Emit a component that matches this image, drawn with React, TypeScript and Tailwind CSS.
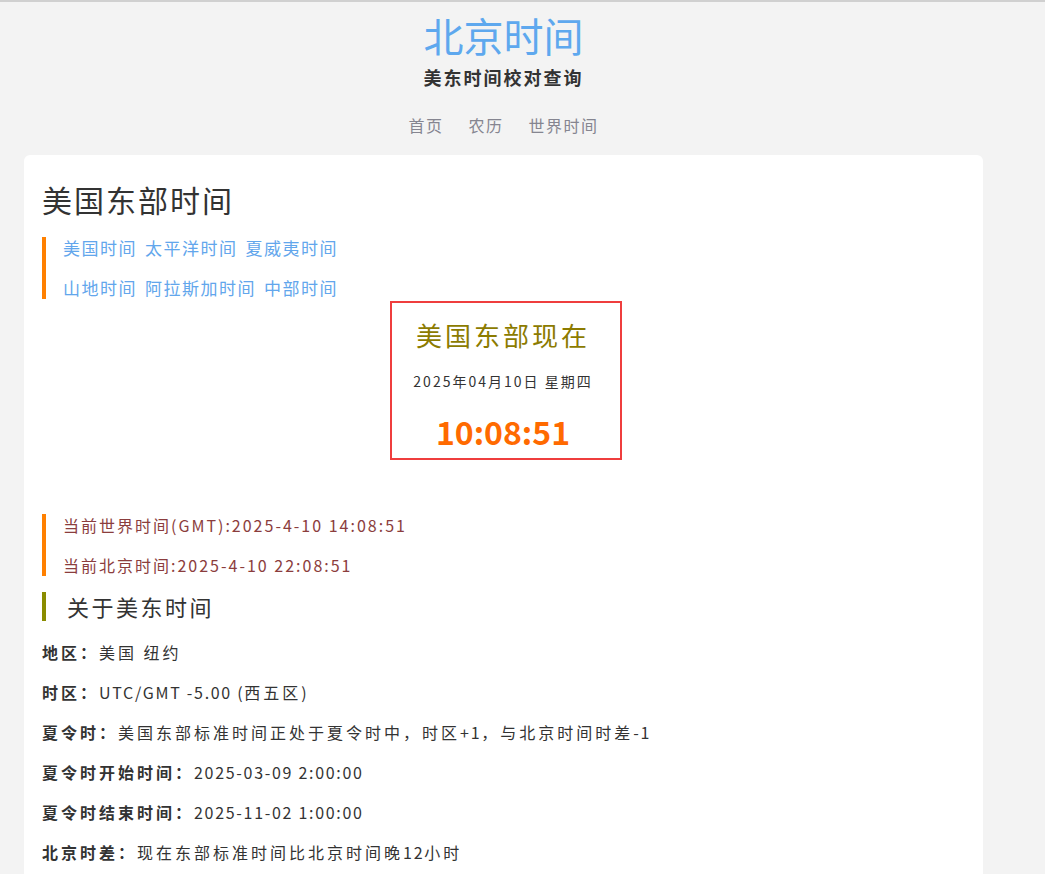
import React from "react";

const font = { fontFamily: '"Noto Sans CJK SC", "Noto Sans", sans-serif' };

function L({ children }: { children: React.ReactNode }) {
  return <span className="tracking-[1.7px]">{children}</span>;
}

function Row({ label, children }: { label: string; children: React.ReactNode }) {
  return (
    <div className="h-[40px] flex items-center text-[16px] tracking-[3px] text-[#333] whitespace-pre">
      <span className="font-bold">{label}：</span>
      <span>{children}</span>
    </div>
  );
}

export default function App() {
  return (
    <div className="min-h-[874px] bg-[#f3f3f3] border-t-2 border-[#d0d0d0]" style={font}>
      <div className="w-[959px] ml-[24px]">
        <header className="flex flex-col items-center">
          <h1 className="mt-[9px] h-[48px] leading-[48px] text-[40px] text-[#5ea8ee]">北京时间</h1>
          <div className="mt-[5px] h-[26px] leading-[26px] text-[18px] tracking-[2px] font-bold text-[#333]">
            美东时间校对查询
          </div>
          <nav className="mt-[24px] flex gap-[25px] text-[16px] tracking-[1.5px] text-[#858590] leading-[22px]">
            <span>首页</span>
            <span>农历</span>
            <span>世界时间</span>
          </nav>
        </header>

        <main className="mt-[19px] bg-white rounded-[6px] px-[18px] pt-[24px] pb-[20px]">
          <h2 className="text-[30px] tracking-[2px] leading-[40px] text-[#333]">美国东部时间</h2>

          <div className="mt-[18px] border-l-4 border-[#ff8000] pl-[17px] flex flex-col gap-[18px] text-[17px] tracking-[1.5px] leading-[22px] text-[#62a6ec]">
            <div className="flex gap-[8px]">
              <span>美国时间</span>
              <span>太平洋时间</span>
              <span>夏威夷时间</span>
            </div>
            <div className="flex gap-[8px]">
              <span>山地时间</span>
              <span>阿拉斯加时间</span>
              <span>中部时间</span>
            </div>
          </div>

          <div className="mt-[2px] ml-[348px] w-[232px] h-[159px] border-2 border-[#ef3e3e] pr-[6px] flex flex-col items-center">
            <div className="mt-[15px] text-[26px] tracking-[3px] leading-[34px] text-[#8c7b00]">美国东部现在</div>
            <div className="mt-[19px] text-[14px] tracking-[2px] leading-[20px] text-[#333]">2025年04月10日 星期四</div>
            <div className="mt-[20px] text-[32px] font-bold leading-[40px] text-[#ff6a00]">10:08:51</div>
          </div>

          <div className="mt-[54px] border-l-4 border-[#ff8000] pl-[17px] flex flex-col gap-[18px] text-[16px] tracking-[2px] leading-[22px] text-[#8b3d3d]">
            <div>当前世界时间(GMT):2025-4-10 14:08:51</div>
            <div>当前北京时间:2025-4-10 22:08:51</div>
          </div>

          <div className="mt-[16px] border-l-4 border-[#8a8c00] pl-[21px] h-[29px] flex items-center text-[22px] tracking-[2.5px] text-[#333]">
            关于美东时间
          </div>

          <div className="mt-[11px] flex flex-col">
            <Row label="地区">美国 纽约</Row>
            <Row label="时区">
              <L>UTC/GMT -5.00 (</L>西五区<L>)</L>
            </Row>
            <Row label="夏令时">
              美国东部标准时间正处于夏令时中，时区<L>+1</L>，与北京时间时差<L>-1</L>
            </Row>
            <Row label="夏令时开始时间">
              <L>2025-03-09 2:00:00</L>
            </Row>
            <Row label="夏令时结束时间">
              <L>2025-11-02 1:00:00</L>
            </Row>
            <Row label="北京时差">
              现在东部标准时间比北京时间晚<L>12</L>小时
            </Row>
          </div>
        </main>
      </div>
    </div>
  );
}
